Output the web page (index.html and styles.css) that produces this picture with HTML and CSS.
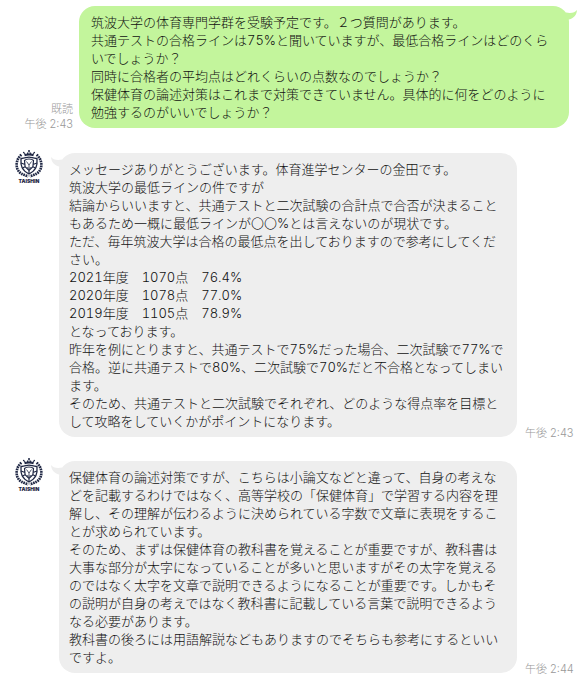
FILE: index.html
```html
<!DOCTYPE html>
<html lang="ja">
<head>
<meta charset="utf-8">
<meta name="viewport" content="width=device-width, initial-scale=1">
<title>トーク</title>
<link rel="stylesheet" href="styles.css">
</head>
<body>
<svg class="defs" aria-hidden="true">
  <symbol id="crest" viewBox="0 0 28 28">
    <g fill="currentColor">
      <path d="M9.8 6.2 8.8 2.6l2.5 1.7L12.5 2l1 2L14 .2l.7 3.8 1-2 1.2 2.3 2.4-1.7-1 3.6C16 5.3 12 5.3 9.8 6.2z"/>
      <circle cx="14" cy="1" r="1"/><circle cx="8.7" cy="2.6" r=".8"/><circle cx="19.3" cy="2.6" r=".8"/>
    </g>
    <g fill="none" stroke="currentColor">
      <path stroke-width="2.6" stroke-dasharray="1.7 .7" d="M6.4 4.8C.4 9.5-.2 19.5 6.2 23.5c2 1.3 4.5 1.8 7 3"/>
      <path stroke-width="2.6" stroke-dasharray="1.7 .7" d="M21.6 4.8c6 4.7 6.6 14.7.2 18.7-2 1.3-4.5 1.8-7 3"/>
      <path stroke-width="1.3" d="M6 8.5c3.6.2 5.4-1.4 8-1.4s4.4 1.6 8 1.4c.6 7.6-1 12-8 15.5C7 20.5 5.4 16.1 6 8.5z"/>
      <path stroke-width="1.2" d="M9.5 10.5c1.8-2 7.2-2 9 0l-.6 6.3-3.9 3.7-3.9-3.7zM6 13l4 1.5M22 13l-4 1.5M7.500 18l3.200-1.500M20.500 18l-3.200-1.500M14 20.500V24"/>
      <path stroke-width=".8" d="m11.500 11.500 2.500 3.500 2.500-3.500M14 15v3M12 17.500l2 1 2-1"/>
    </g>
  </symbol>
  <symbol id="tail" viewBox="0 0 12 10">
    <path fill="currentColor" d="M0 0c2 2.400 5.500 3.600 11 2.600L12 9.500H8C3.500 8.500.3 5 0 0z"/>
  </symbol>
</svg>
<main class="chat">
  <article class="message sent">
    <div class="meta"><span>既読</span><time>午後 2:43</time></div>
    <div class="bubble">
      <svg class="tail" aria-hidden="true"><use href="#tail"/></svg>
      <p>筑波大学の体育専門学群を受験予定です。２つ質問があります。</p>
      <p>共通テストの合格ラインは75%と聞いていますが、最低合格ラインはどのくらいでしょうか？</p>
      <p>同時に合格者の平均点はどれくらいの点数なのでしょうか？</p>
      <p>保健体育の論述対策はこれまで対策できていません。具体的に何をどのように勉強するのがいいでしょうか？</p>
    </div>
  </article>
  <article class="message received">
    <div class="avatar"><svg class="crest" aria-hidden="true"><use href="#crest"/></svg><span>TAISHIN</span></div>
    <div class="bubble">
      <svg class="tail" aria-hidden="true"><use href="#tail"/></svg>
      <p>メッセージありがとうございます。体育進学センターの金田です。</p>
      <p>筑波大学の最低ラインの件ですが</p>
      <p>結論からいいますと、共通テストと二次試験の合計点で合否が決まることもあるため一概に最低ラインが〇〇%とは言えないのが現状です。</p>
      <p>ただ、毎年筑波大学は合格の最低点を出しておりますので参考にしてください。</p>
      <p>2021年度　1070点　76.4%</p>
      <p>2020年度　1078点　77.0%</p>
      <p>2019年度　1105点　78.9%</p>
      <p>となっております。</p>
      <p>昨年を例にとりますと、共通テストで75%だった場合、二次試験で77%で合格。逆に共通テストで80%、二次試験で70%だと不合格となってしまいます。</p>
      <p>そのため、共通テストと二次試験でそれぞれ、どのような得点率を目標として攻略をしていくかがポイントになります。</p>
    </div>
    <div class="meta"><time>午後 2:43</time></div>
  </article>
  <article class="message received">
    <div class="avatar"><svg class="crest" aria-hidden="true"><use href="#crest"/></svg><span>TAISHIN</span></div>
    <div class="bubble">
      <svg class="tail" aria-hidden="true"><use href="#tail"/></svg>
      <p>保健体育の論述対策ですが、こちらは小論文などと違って、自身の考えなどを記載するわけではなく、高等学校の「保健体育」で学習する内容を理解し、その理解が伝わるように決められている字数で文章に表現をすることが求められています。</p>
      <p>そのため、まずは保健体育の教科書を覚えることが重要ですが、教科書は大事な部分が太字になっていることが多いと思いますがその太字を覚えるのではなく太字を文章で説明できるようになることが重要です。しかもその説明が自身の考えではなく教科書に記載している言葉で説明できるようなる必要があります。</p>
      <p>教科書の後ろには用語解説などもありますのでそちらも参考にするといいですよ。</p>
    </div>
    <div class="meta"><time>午後 2:44</time></div>
  </article>
</main>
</body>
</html>
```
FILE: styles.css
```css
* {
  box-sizing: border-box;
}

body {
  margin: 0;
  background: #fff;
  color: #111;
  font-family: Inter, "Noto Sans CJK JP", sans-serif;
  font-size: 13px;
  font-weight: 300;
  line-height: 18px;
}

p {
  margin: 0;
}

.defs {
  position: absolute;
  width: 0;
  height: 0;
}

.chat {
  display: flex;
  flex-direction: column;
  gap: 24px;
  padding: 6px 0 15px;
}

.message {
  display: grid;
}

.sent {
  grid-template-columns: 73px 1fr;
  column-gap: 6px;
  padding-right: 16px;
  margin-bottom: 1px;
}

.received {
  grid-template-columns: 36px 1fr 60px;
  column-gap: 8px;
  padding-left: 15px;
}

.bubble {
  position: relative;
  padding: 7px 10px;
  border-radius: 16px;
  background: #eee;
  font-variant-numeric: tabular-nums;
}

.sent .bubble {
  padding: 7px 12px;
  background: #c3f59c;
}

.tail {
  position: absolute;
  top: 4px;
  left: -8px;
  width: 12px;
  height: 10px;
  color: #eee;
}

.sent .tail {
  right: -8px;
  left: auto;
  color: #c3f59c;
  transform: scaleX(-1);
}

.meta {
  display: flex;
  flex-direction: column;
  align-self: end;
  margin-bottom: -4px;
  color: #999;
  font-size: 11px;
  line-height: 15px;
  text-align: right;
  white-space: nowrap;
}

.received .meta {
  text-align: left;
}

.avatar {
  display: flex;
  flex-direction: column;
  align-items: center;
  width: 28px;
  margin-top: -3px;
  color: #1f2744;
}

.avatar span {
  font-size: 5px;
  font-weight: 900;
  line-height: 6px;
}

.crest {
  width: 28px;
  height: 28px;
}
```
